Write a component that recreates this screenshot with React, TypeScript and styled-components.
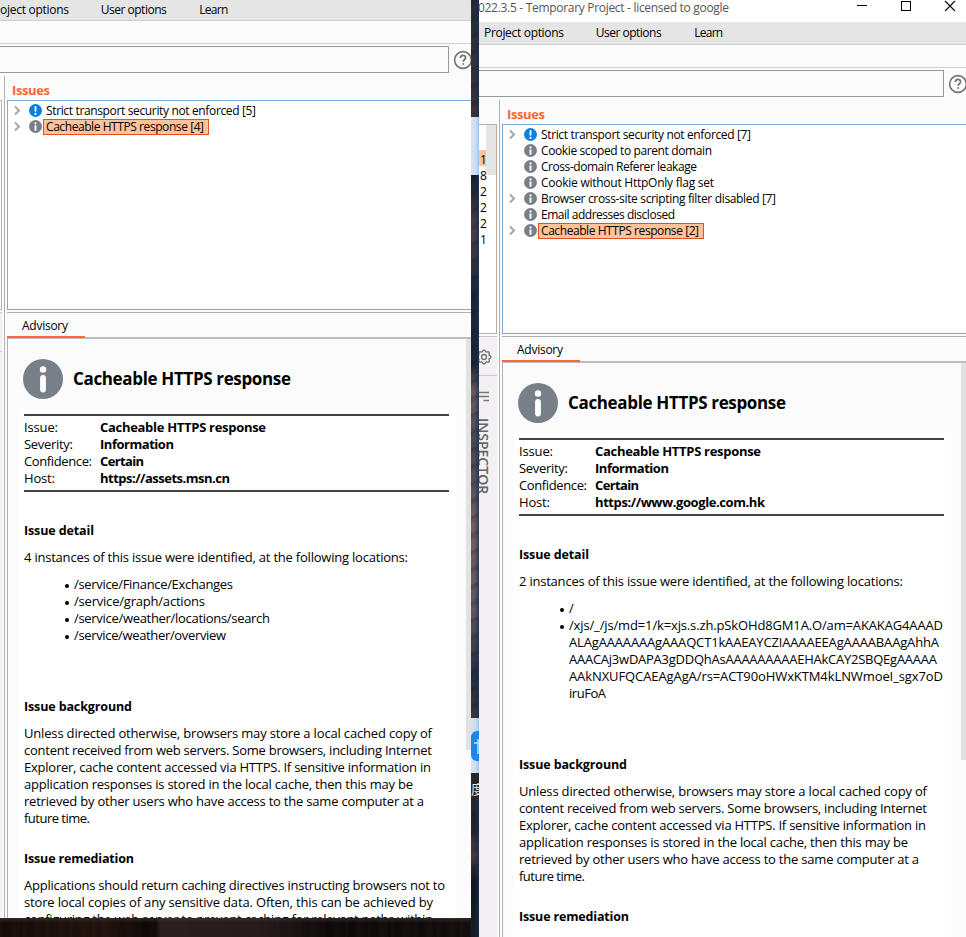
import React, { useLayoutEffect, useRef, useState } from 'react';
import styled, { createGlobalStyle, css } from 'styled-components';

const GlobalStyle = createGlobalStyle`
  * { box-sizing: border-box; }
  body { margin: 0; background: #fff; font-family: "Open Sans", "Noto Sans", sans-serif; color: #000; }
`;

const Screen = styled.div`
  display: flex;
  width: 966px;
  height: 937px;
  overflow: hidden;
`;

/* ---------- text fitted to a fixed run width ---------- */

const Run = styled.span`
  display: inline-block;
  white-space: pre;
  flex: none;
`;

function Fit({ w, children }: { w: number; children: string }) {
  const ref = useRef<HTMLSpanElement>(null);
  const [spacing, setSpacing] = useState(0);
  useLayoutEffect(() => {
    if (ref.current && children.length > 1) {
      const natural = ref.current.getBoundingClientRect().width;
      setSpacing((w - natural) / (children.length - 1));
    }
  }, [w, children]);
  return <Run ref={ref} style={{ letterSpacing: spacing }}>{children}</Run>;
}

/* ---------- desktop behind the windows ---------- */

const LeftStack = styled.div`
  width: 471px;
  flex: none;
  display: flex;
  flex-direction: column;
`;

const DesktopBottom = styled.div`
  flex: 1;
  background:
    linear-gradient(180deg, rgba(70, 55, 50, 0.6), rgba(0, 0, 0, 0) 25%),
    repeating-linear-gradient(90deg, rgba(60, 38, 28, 0.15) 0, transparent 5px 9px, rgba(50, 32, 25, 0.2) 14px, transparent 23px),
    linear-gradient(90deg, #140c09, #20130d 22%, #0a0706 33%, #2b2020 34%, #241b1b 55%, #0d0909 70%, #120e0e);
`;

const DesktopGap = styled.div`
  width: 8px;
  flex: none;
  display: flex;
  flex-direction: column;
  overflow: hidden;
`;

const Rock = styled.div<{ $h?: number; $tone: string }>`
  ${p => (p.$h ? css`height: ${p.$h}px; flex: none;` : css`flex: 1;`)}
  background:
    linear-gradient(90deg, transparent 45%, rgba(14, 48, 98, 0.7)),
    repeating-linear-gradient(155deg, rgba(10, 14, 24, 0.25) 0, transparent 6px 13px, rgba(20, 20, 30, 0.25) 17px, transparent 22px 31px),
    linear-gradient(180deg, ${p => p.$tone});
`;

const SkyPatch = styled.div<{ $h: number }>`
  height: ${p => p.$h}px;
  flex: none;
  display: flex;
  align-items: center;
  background: linear-gradient(90deg, #dce4ef, #c9ddf5 60%, #9cc6f6);
`;

const AppTile = styled.div`
  width: 20px;
  height: 30px;
  flex: none;
  border-radius: 6px;
  background: #1b87ec;
  svg { display: block; }
`;

const IconCaption = styled.div`
  height: 25px;
  flex: none;
  padding-top: 7px;
  background: #292628;
  color: #e4e6ea;
  font: 13px/18px "Noto Sans CJK SC", sans-serif;
  white-space: nowrap;
`;

/* ---------- window ---------- */

const Window = styled.div<{ $h: number; $w: number }>`
  width: ${p => p.$w}px;
  height: ${p => p.$h}px;
  flex: none;
  display: flex;
  flex-direction: column;
  overflow: hidden;
  background: #fbfbfb;
`;

const TitleBar = styled.div`
  height: 22px;
  flex: none;
  display: flex;
  justify-content: space-between;
  background: #fff;
  color: #555;
  font-size: 12px;
  line-height: 15px;
`;

const TitleText = styled.div`
  margin-left: -1px;
`;

const Controls = styled.div`
  display: flex;
  padding-right: 10px;
  svg { display: block; }
`;

const MenuBar = styled.div<{ $h: number; $indent: number }>`
  height: ${p => p.$h}px;
  flex: none;
  display: flex;
  gap: 32px;
  align-items: center;
  background: #e5e5e5;
  border-bottom: 1px solid #ccd0cf;
  font-size: 12px;
  line-height: 16px;
  & > :first-child { margin-left: ${p => p.$indent}px; }
  & > :last-child { margin-left: 1px; }
`;

const SubBar = styled.div`
  height: 23px;
  flex: none;
  border-bottom: 1px solid #ccd3d0;
`;

const FilterRow = styled.div`
  height: 32px;
  flex: none;
  display: flex;
  align-items: flex-start;
  padding-top: 2px;
`;

const FilterField = styled.div<{ $w: number }>`
  width: ${p => p.$w}px;
  height: 27px;
  flex: none;
  border: 1px solid #999;
  border-left: 0;
`;

const HelpIcon = styled.svg`
  flex: none;
  margin: 4px 0 0 4px;
`;

const Body = styled.div`
  flex: 1;
  display: flex;
  min-height: 0;
`;

/* ---------- side column ---------- */

const Side = styled.div<{ $w: number }>`
  width: ${p => p.$w}px;
  flex: none;
  display: flex;
  flex-direction: column;
  overflow: hidden;
  padding-top: 24px;
`;

const CountPane = styled.div`
  height: 210px;
  flex: none;
  display: flex;
  justify-content: space-between;
  border: solid #b5b0b0;
  border-width: 1px 1px 1px 0;
  background: #fff;
`;

const Counts = styled.div`
  padding-top: 25px;
  font-size: 12px;
  line-height: 16px;
`;

const Count = styled.div<{ $hot?: boolean }>`
  width: 7px;
  height: 16px;
  padding-left: 1px;
  line-height: 19px;
  background: ${p => (p.$hot ? '#ffc399' : 'transparent')};
`;

const CountThumb = styled.div`
  width: 10px;
  height: 50px;
  flex: none;
  background: #e5e5e5;
`;

const Inspector = styled.div`
  flex: 1;
  margin-top: 2px;
  border-top: 1px solid #c9c5c5;
  background: #f2f0f2;
  min-width: 0;
  overflow: hidden;
`;

const GearCell = styled.div`
  height: 39px;
  border-bottom: 1px solid #ccc;
  padding: 12px 0 0;
  svg { display: block; margin-left: -3px; }
`;

const Bars = styled.svg`
  display: block;
  margin: 15px 0 0;
`;

const InspectorLabel = styled.div`
  writing-mode: vertical-rl;
  width: 20px;
  line-height: 20px;
  margin: 16px 0 0 -6px;
  font-size: 14px;
  font-weight: 600;
  color: #666;
  white-space: nowrap;
`;

const Splitter = styled.div`
  width: 5px;
  flex: none;
  display: flex;
  padding-left: 2px;
  &::before { content: ''; width: 1px; background: #b5b0b0; }
`;

/* ---------- main column ---------- */

const Main = styled.div`
  flex: 1;
  min-width: 0;
  display: flex;
  flex-direction: column;
`;

const PaneTitle = styled.div`
  height: 24px;
  flex: none;
  padding: 5px 0 0 5px;
  font-size: 13px;
  line-height: 18px;
  font-weight: 700;
  color: #ff6633;
`;

const Tree = styled.div`
  height: 210px;
  flex: none;
  border: solid #7faad6;
  border-width: 1px 0 1px 1px;
  background: #fff;
  padding: 2px 0 0 6px;
`;

const TreeRow = styled.div`
  height: 16px;
  display: flex;
  align-items: flex-start;
  font-size: 12px;
`;

const Twist = styled.svg`
  width: 15px;
  height: 14px;
  flex: none;
`;

const TreeLabel = styled.div<{ $on?: boolean }>`
  height: 16px;
  margin-left: 1px;
  padding: 0 4px 0 2px;
  line-height: 14px;
  border: 1px solid ${p => (p.$on ? '#e0521f' : 'transparent')};
  background: ${p => (p.$on ? '#ffc399' : 'transparent')};
`;

const TabStrip = styled.div`
  height: 27px;
  flex: none;
  margin-top: 2px;
  border-top: 1px solid #b5b0b0;
  border-bottom: 2px solid #bcbcbc;
  padding-top: 2px;
`;

const Tab = styled.div`
  width: 78px;
  height: 23px;
  padding: 3px 0 0 15px;
  border-bottom: 2px solid #ff6633;
  font-size: 12px;
  line-height: 16px;
`;

const Doc = styled.div`
  flex: 1;
  display: flex;
  justify-content: space-between;
  min-height: 0;
  border-left: 1px solid #b5b0b0;
`;

const DocColumn = styled.div`
  width: 448px;
  flex: none;
  display: flex;
  flex-direction: column;
`;

const DocHead = styled.div`
  height: 70px;
  flex: none;
  display: flex;
  align-items: center;
  padding: 9px 0 0 15px;
  gap: 10px;
  font-size: 17px;
  font-weight: 700;
  line-height: 24px;
`;

const Paper = styled.div`
  flex: 1;
  margin-left: 10px;
  padding: 5px 7px 0 6px;
  background: #fff;
  font-size: 13px;
  line-height: 17px;
`;

const Facts = styled.div`
  display: grid;
  grid-template-columns: 76px 1fr;
  grid-auto-rows: 17px;
  border: solid #444;
  border-width: 2px 0;
  height: 78px;
  padding-top: 3px;
`;

const Strong = styled.div`
  font-weight: 700;
`;

const Heading = styled.div<{ $top: number }>`
  margin-top: ${p => p.$top}px;
  height: 17px;
  font-size: 12.5px;
  font-weight: 700;
`;

const Para = styled.div`
  margin-top: 10px;
`;

const Line = styled.div`
  height: 17px;
`;

const List = styled.div`
  margin-top: 10px;
`;

const Item = styled.div`
  display: flex;
  padding-left: 41px;
  &::before {
    content: '';
    width: 4px;
    height: 4px;
    margin: 8px 5px 0 0;
    border-radius: 50%;
    background: #000;
  }
`;

const ScrollThumb = styled.div<{ $h: number }>`
  width: 5px;
  height: ${p => p.$h}px;
  background: #e2e2e2;
`;

/* ---------- drawings ---------- */

const BadgeSvg = styled.svg<{ $drop?: boolean }>`
  display: block;
  flex: none;
  margin-top: ${p => (p.$drop ? 1 : 0)}px;
`;

const InfoBadge = ({ size, drop }: { size: number; drop?: boolean }) => (
  <BadgeSvg $drop={drop} width={size} height={size} viewBox="0 0 40 40">
    <circle cx="20" cy="20" r="20" fill="#777f88" />
    <circle cx="20" cy="10.5" r="3.2" fill="#fff" />
    <rect x="17.1" y="16" width="5.8" height="17.5" rx="2.9" fill="#fff" />
  </BadgeSvg>
);

const AlertBadge = () => (
  <BadgeSvg $drop width={13} height={13} viewBox="0 0 13 13">
    <circle cx="6.5" cy="6.5" r="6.5" fill="#0a7fde" />
    <rect x="5.6" y="2.1" width="1.8" height="5.6" rx=".8" fill="#fff" />
    <circle cx="6.5" cy="9.9" r="1.1" fill="#fff" />
  </BadgeSvg>
);

const Help = () => (
  <HelpIcon width="20" height="20" viewBox="0 0 20 20" fill="none" stroke="#737373">
    <circle cx="10" cy="10" r="8.4" strokeWidth="1.6" />
    <path d="M7.4 8.1c0-3.6 5.2-3.5 5.2-.3 0 1.900-2.400 2-2.400 4" strokeWidth="1.7" />
    <circle cx="10.2" cy="14" r=".7" fill="#737373" strokeWidth=".6" />
  </HelpIcon>
);

const Gear = () => {
  const points = Array.from({ length: 64 }, (_, i) => {
    const a = (i / 64) * Math.PI * 2;
    const r = 6.2 + 0.75 * Math.cos(a * 8);
    return `${8 + r * Math.cos(a)},${8 + r * Math.sin(a)}`;
  }).join(' ');
  return (
    <svg width="16" height="16" viewBox="0 0 16 16" fill="none" stroke="#707070" strokeWidth="1.3">
      <polygon points={points} />
      <circle cx="8" cy="8" r="2.5" />
    </svg>
  );
};

/* ---------- content ---------- */

type Txt = [string, number];
type Issue = { text: Txt; open?: boolean; alert?: boolean; on?: boolean };

const BACKGROUND: Txt[] = [
  ['Unless directed otherwise, browsers may store a local cached copy of', 408],
  ['content received from web servers. Some browsers, including Internet', 408],
  ['Explorer, cache content accessed via HTTPS. If sensitive information in', 407],
  ['application responses is stored in the local cache, then this may be', 389],
  ['retrieved by other users who have access to the same computer at a', 400],
  ['future time.', 66],
];

const REMEDIATION: Txt[] = [
  ['Applications should return caching directives instructing browsers not to', 421],
  ['store local copies of any sensitive data. Often, this can be achieved by', 409],
  ['configuring the web server to prevent caching for relevant paths within', 409],
];

type WinProps = {
  main?: boolean;
  w: number;
  h: number;
  issues: Issue[];
  host: Txt;
  summary: Txt;
  locations: Txt[][];
  thumb: number;
};

function Lines({ lines }: { lines: Txt[] }) {
  return <>{lines.map(([t, w]) => <Line key={t}><Fit w={w}>{t}</Fit></Line>)}</>;
}

function BurpWindow({ main, w, h, issues, host, summary, locations, thumb }: WinProps) {
  return (
    <Window $w={w} $h={h}>
      {main && (
        <TitleBar>
          <TitleText><Fit w={251}>022.3.5 - Temporary Project - licensed to google</Fit></TitleText>
          <Controls>
            <svg width="100" height="14" viewBox="0 0 100 14" fill="none" stroke="#000">
              <path d="M1 5.5h10" />
              <rect x="45.5" y="1.5" width="9" height="9" />
              <path d="M89 1l10 10M99 1l-10 10" strokeWidth="1.1" />
            </svg>
          </Controls>
        </TitleBar>
      )}
      <MenuBar $h={main ? 23 : 21} $indent={main ? 5 : 0}>
        {main ? <Fit w={80}>Project options</Fit> : <Fit w={69}>oject options</Fit>}
        <Fit w={66}>User options</Fit>
        <Fit w={29}>Learn</Fit>
      </MenuBar>
      <SubBar />
      <FilterRow>
        <FilterField $w={main ? 465 : 449} />
        <Help />
      </FilterRow>
      <Body>
        <Side $w={main ? 18 : 2}>
          <CountPane>
            {main && (
              <>
                <Counts>
                  {['1', '8', '2', '2', '2', '1'].map((n, i) => <Count key={i} $hot={i === 0}>{n}</Count>)}
                </Counts>
                <CountThumb />
              </>
            )}
          </CountPane>
          <Inspector>
            <GearCell>{main && <Gear />}</GearCell>
            {main && (
              <>
                <Bars width="11" height="11" viewBox="0 0 11 11" fill="none" stroke="#777" strokeWidth="1.4">
                  <path d="M0 1.500h10M0 5.500h10M4.500 9.500h5.500" />
                </Bars>
                <InspectorLabel>INSPECTOR</InspectorLabel>
              </>
            )}
          </Inspector>
        </Side>
        <Splitter />
        <Main>
          <PaneTitle><Fit w={38}>Issues</Fit></PaneTitle>
          <Tree>
            {issues.map(it => (
              <TreeRow key={it.text[0]}>
                <Twist viewBox="0 0 15 14" fill="none" stroke="#a8a8a8" strokeWidth="2.1">
                  {it.open && <path d="M1 3.500l4 4-4 4" />}
                </Twist>
                {it.alert ? <AlertBadge /> : <InfoBadge size={13} drop />}
                <TreeLabel $on={it.on}><Fit w={it.text[1]}>{it.text[0]}</Fit></TreeLabel>
              </TreeRow>
            ))}
          </Tree>
          <TabStrip><Tab><Fit w={46}>Advisory</Fit></Tab></TabStrip>
          <Doc>
            <DocColumn>
              <DocHead>
                <InfoBadge size={40} />
                <Fit w={218}>Cacheable HTTPS response</Fit>
              </DocHead>
              <Paper>
                <Facts>
                  <div><Fit w={34}>Issue:</Fit></div>
                  <Strong><Fit w={166}>Cacheable HTTPS response</Fit></Strong>
                  <div><Fit w={49}>Severity:</Fit></div>
                  <Strong><Fit w={74}>Information</Fit></Strong>
                  <div><Fit w={68}>Confidence:</Fit></div>
                  <Strong><Fit w={44}>Certain</Fit></Strong>
                  <div><Fit w={31}>Host:</Fit></div>
                  <Strong><Fit w={host[1]}>{host[0]}</Fit></Strong>
                </Facts>
                <Heading $top={30}><Fit w={70}>Issue detail</Fit></Heading>
                <Para><Lines lines={[summary]} /></Para>
                <List>
                  {locations.map(lines => (
                    <Item key={lines[0][0]}><div><Lines lines={lines} /></div></Item>
                  ))}
                </List>
                <Heading $top={54}><Fit w={108}>Issue background</Fit></Heading>
                <Para><Lines lines={BACKGROUND} /></Para>
                <Heading $top={23}><Fit w={110}>Issue remediation</Fit></Heading>
                <Para><Lines lines={REMEDIATION} /></Para>
              </Paper>
            </DocColumn>
            <ScrollThumb $h={thumb} />
          </Doc>
        </Main>
      </Body>
    </Window>
  );
}

export default function App() {
  return (
    <>
      <GlobalStyle />
      <Screen>
        <LeftStack>
          <BurpWindow
            w={471}
            h={918}
            thumb={411}
            issues={[
              { text: ['Strict transport security not enforced [5]', 210], open: true, alert: true },
              { text: ['Cacheable HTTPS response [4]', 158], open: true, on: true },
            ]}
            host={['https://assets.msn.cn', 130]}
            summary={['4 instances of this issue were identified, at the following locations:', 384]}
            locations={[
              [['/service/Finance/Exchanges', 159]],
              [['/service/graph/actions', 131]],
              [['/service/weather/locations/search', 196]],
              [['/service/weather/overview', 152]],
            ]}
          />
          <DesktopBottom />
        </LeftStack>
        <DesktopGap>
          <Rock $h={117} $tone="#262a35, #323139 50%, #40302f" />
          <SkyPatch $h={58} />
          <Rock $h={543} $tone="#171f2b, #4d3e43 10%, #1c2535 22%, #1c2535 35%, #6b5a5b 40%, #4d464d 50%, #6e5d5c 65%, #63565a 80%, #262b3a 92%, #3d3438" />
          <SkyPatch $h={55}>
            <AppTile>
              <svg width="8" height="30" fill="none" stroke="#c5e0fb" strokeWidth="1.5">
                <path d="M3 12h5M7 8v15" />
              </svg>
            </AppTile>
          </SkyPatch>
          <IconCaption>度</IconCaption>
          <Rock $tone="#292628, #232226 20%, #4c3a3a 40%, #111722 60%, #1d1c22" />
        </DesktopGap>
        <BurpWindow
          main
          w={487}
          h={937}
          thumb={397}
          issues={[
            { text: ['Strict transport security not enforced [7]', 210], open: true, alert: true },
            { text: ['Cookie scoped to parent domain', 171] },
            { text: ['Cross-domain Referer leakage', 156] },
            { text: ['Cookie without HttpOnly flag set', 173] },
            { text: ['Browser cross-site scripting filter disabled [7]', 235], open: true },
            { text: ['Email addresses disclosed', 134] },
            { text: ['Cacheable HTTPS response [2]', 158], open: true, on: true },
          ]}
          host={['https://www.google.com.hk', 170]}
          summary={['2 instances of this issue were identified, at the following locations:', 384]}
          locations={[
            [['/', 5]],
            [
              ['/xjs/_/js/md=1/k=xjs.s.zh.pSkOHd8GM1A.O/am=AKAKAG4AAAD', 374],
              ['ALAgAAAAAAAgAAAQCT1kAAEAYCZIAAAAEEAgAAAABAAgAhhA', 370],
              ['AAACAj3wDAPA3gDDQhAsAAAAAAAAAEHAkCAY2SBQEgAAAAA', 368],
              ['AAkNXUFQCAEAgAgA/rs=ACT90oHWxKTM4kLNWmoeI_sgx7oD', 374],
              ['iruFoA', 37],
            ],
          ]}
        />
      </Screen>
    </>
  );
}
